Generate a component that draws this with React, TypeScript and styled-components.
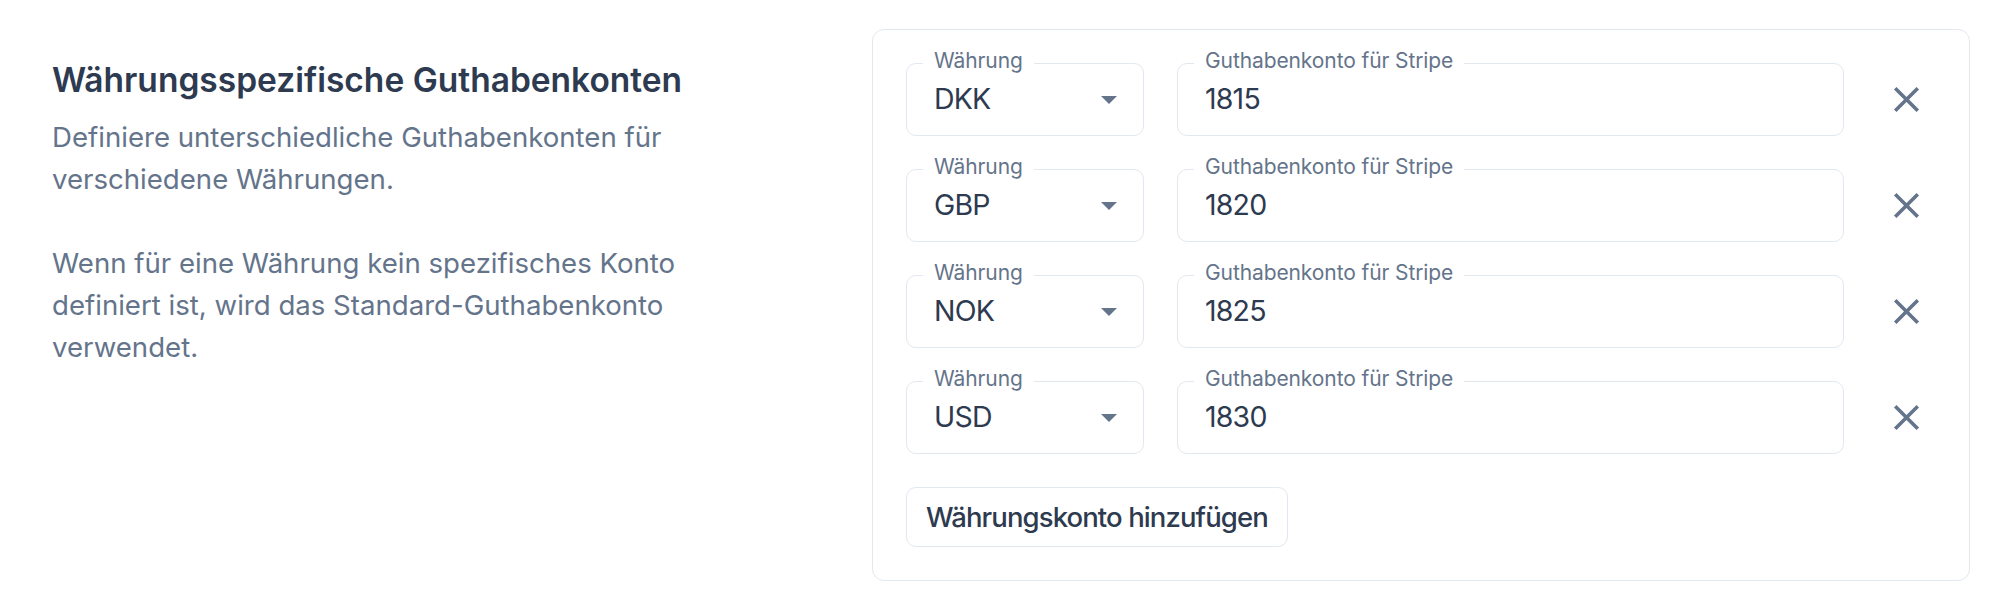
import React from "react";
import styled, { createGlobalStyle } from "styled-components";

const GlobalStyle = createGlobalStyle`
  html, body {
    margin: 0;
    padding: 0;
    background: #ffffff;
  }
  body {
    font-family: Inter, "Noto Sans", "Liberation Sans", sans-serif;
    -webkit-font-smoothing: antialiased;
  }
  *, *::before, *::after {
    box-sizing: border-box;
  }
`;

const Page = styled.div`
  display: grid;
  grid-template-columns: 680px 1fr;
  column-gap: 140px;
  width: 1998px;
  padding: 29px 28px 0 52px;
`;

const Intro = styled.section`
  padding-top: 31px;
`;

const Title = styled.h2`
  margin: 0;
  font-size: 33.5px;
  line-height: 40px;
  font-weight: 600;
  color: #2d3a4f;
`;

const Text = styled.p`
  margin: 16px 0 0;
  font-size: 27.6px;
  line-height: 42px;
  font-weight: 400;
  color: #64748b;

  & + & {
    margin-top: 42px;
  }
`;

const Card = styled.div`
  display: flex;
  flex-direction: column;
  gap: 33.5px;
  padding: 33px;
  border: 1px solid #e2e8f0;
  border-radius: 12px;
  background: #ffffff;
`;

const Row = styled.div`
  display: grid;
  grid-template-columns: 238px 1fr 59px;
  column-gap: 33px;
  align-items: center;
`;

const Field = styled.div<{ $select?: boolean }>`
  position: relative;
  display: flex;
  align-items: center;
  justify-content: space-between;
  height: 72.5px;
  padding: 0 ${(p) => (p.$select ? "26px" : "27px")} 0 27px;
  border: 1px solid #e2e8f0;
  border-radius: 10px;
  font-size: 28.5px;
  letter-spacing: -0.8px;
  color: #2d3a4f;
`;

const FieldLabel = styled.span`
  position: absolute;
  top: -16px;
  left: 16px;
  padding: 0 11px;
  background: #ffffff;
  font-size: 21px;
  line-height: 25px;
  letter-spacing: -0.1px;
  color: #64748b;
  white-space: nowrap;
`;

const Value = styled.span`
  line-height: 1;
`;

const Caret = styled.svg`
  width: 16px;
  height: 8px;
  margin-top: 2px;
  flex: none;
`;

const RemoveButton = styled.button`
  display: flex;
  align-items: center;
  justify-content: center;
  width: 59px;
  height: 59px;
  padding: 0;
  border: none;
  background: transparent;
  color: #64748b;
  cursor: pointer;
`;

const AddButton = styled.button`
  align-self: flex-start;
  height: 60px;
  padding: 0 19px;
  border: 1px solid #e2e8f0;
  border-radius: 10px;
  background: #ffffff;
  font-family: inherit;
  font-size: 27.5px;
  font-weight: 500;
  letter-spacing: -0.9px;
  color: #2d3a4f;
  cursor: pointer;
`;

const rows = [
  { currency: "DKK", account: "1815" },
  { currency: "GBP", account: "1820" },
  { currency: "NOK", account: "1825" },
  { currency: "USD", account: "1830" },
];

const CloseIcon = () => (
  <svg width="43" height="43" viewBox="0 0 24 24" fill="currentColor" aria-hidden="true">
    <path d="M19 6.41 17.59 5 12 10.59 6.41 5 5 6.41 10.59 12 5 17.59 6.41 19 12 13.41 17.59 19 19 17.59 13.41 12z" />
  </svg>
);

export default function App() {
  return (
    <>
      <GlobalStyle />
      <Page>
        <Intro>
          <Title>Währungsspezifische Guthabenkonten</Title>
          <Text>Definiere unterschiedliche Guthabenkonten für verschiedene Währungen.</Text>
          <Text>
            Wenn für eine Währung kein spezifisches Konto definiert ist, wird das
            Standard-Guthabenkonto verwendet.
          </Text>
        </Intro>
        <Card>
          {rows.map((r) => (
            <Row key={r.currency}>
              <Field $select>
                <FieldLabel>Währung</FieldLabel>
                <Value>{r.currency}</Value>
                <Caret viewBox="0 0 16 8" aria-hidden="true">
                  <path d="M0 0h16L8 8z" fill="#64748b" />
                </Caret>
              </Field>
              <Field>
                <FieldLabel>Guthabenkonto für Stripe</FieldLabel>
                <Value>{r.account}</Value>
              </Field>
              <RemoveButton aria-label="Entfernen">
                <CloseIcon />
              </RemoveButton>
            </Row>
          ))}
          <AddButton>Währungskonto hinzufügen</AddButton>
        </Card>
      </Page>
    </>
  );
}
